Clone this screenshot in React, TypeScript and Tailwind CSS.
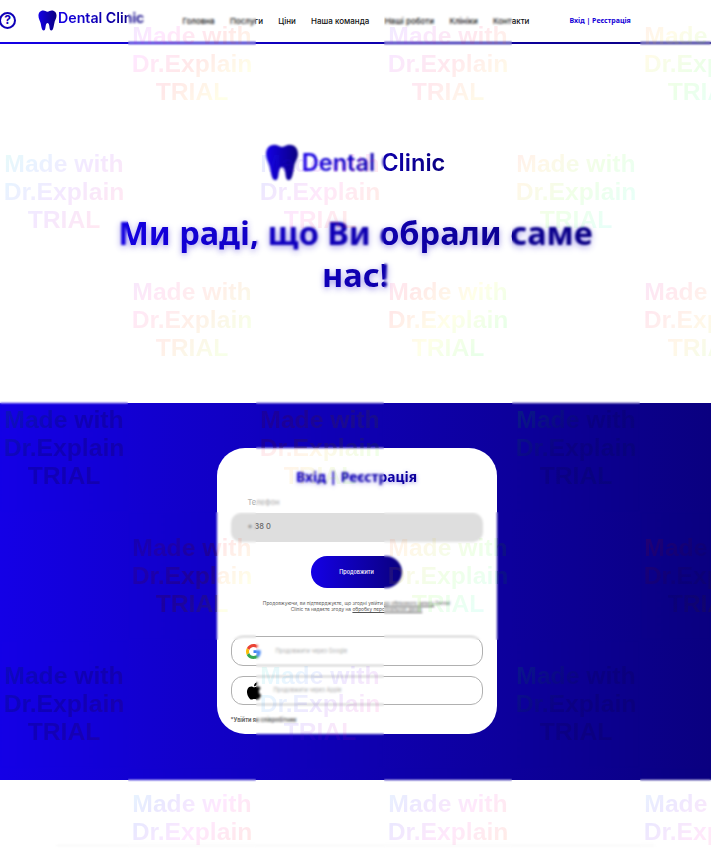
import { CSSProperties } from "react"

const navItems = ["Головна", "Послуги", "Ціни", "Наша команда", "Наші роботи", "Клініки", "Контакти"]

// hue of the watermark per grid cell, null = empty cell
type Tile = { hue: number; mode?: "dark"; splitLeft?: number; splitRight?: number; splitTop?: number }

const tiles: (Tile | null)[] = [
  null, { hue: 240 }, null, { hue: 225 }, null, { hue: 350 },
  { hue: 150 }, null, { hue: 190 }, null, { hue: 340 }, null,
  null, { hue: 260 }, null, { hue: 300 }, null, { hue: 280 },
  { hue: 200, mode: "dark" }, null, { hue: 280, splitTop: 64 }, null, { hue: 170, mode: "dark" }, null,
  null, { hue: 240, splitLeft: 89 }, null, { hue: 340, splitRight: 113 }, null, { hue: 330, mode: "dark" },
  { hue: 220, mode: "dark" }, null, { hue: 140 }, null, { hue: 190, mode: "dark" }, null,
  null, { hue: 180 }, null, { hue: 190 }, null, { hue: 190 },
]

function rainbow(hue: number, lightness: number, alpha: number) {
  const stops = [0, 60, 120, 180, 240].map((d) => `hsl(${hue + d} 100% ${lightness}% / ${alpha})`)
  return `linear-gradient(135deg, ${stops.join(", ")})`
}

function tileStyle(t: Tile): CSSProperties {
  const pale = rainbow(t.hue, 50, 0.09)
  const shade = "rgba(10,0,100,.32)"
  // over the blue band the lettering only darkens the background, hue barely shows
  const dark = `linear-gradient(135deg, hsl(${t.hue} 100% 22% / .32), rgba(10,0,100,.32) 45%, hsl(${t.hue + 60} 100% 18% / .32))`
  if (t.mode === "dark") return { backgroundImage: dark }
  if (t.splitLeft) {
    return { backgroundImage: `linear-gradient(90deg, ${shade} ${t.splitLeft}px, transparent ${t.splitLeft}px), ${pale}` }
  }
  if (t.splitRight) {
    return { backgroundImage: `linear-gradient(90deg, transparent ${t.splitRight}px, ${shade} ${t.splitRight}px), ${pale}` }
  }
  if (t.splitTop) {
    return { backgroundImage: `linear-gradient(180deg, ${shade} ${t.splitTop}px, transparent ${t.splitTop}px), ${pale}` }
  }
  return { backgroundImage: pale }
}

function Tooth({ id, className }: { id: string; className: string }) {
  return (
    <svg viewBox="0 0 40 44" className={className}>
      <defs>
        <linearGradient id={id} x1="0" y1="0" x2="1" y2="0">
          <stop offset="0" stopColor="#1400e6" />
          <stop offset="1" stopColor="#0a0080" />
        </linearGradient>
      </defs>
      <path
        fill={`url(#${id})`}
        d="M11 1C4.500 1 1 6 1 12c0 6 3 10 4.500 15 1.200 4.500 1.800 16 6.500 16 4 0 3.500-7 4.500-11 .6-2.500 1.500-4.500 3.500-4.500s2.900 2 3.500 4.500c1 4 .5 11 4.500 11 4.700 0 5.300-11.500 6.500-16C35 22 39 18 39 12 39 6 35.500 1 29 1c-3.500 0-6 2.500-9 2.500C17 3.500 14.500 1 11 1z"
      />
    </svg>
  )
}

function GoogleIcon() {
  return (
    <svg viewBox="0 0 48 48" className="h-[15px] w-[15px]">
      <path fill="#EA4335" d="M24 9.500c3.500 0 6.700 1.200 9.200 3.600l6.900-6.900C35.900 2.400 30.500 0 24 0 14.600 0 6.500 5.400 2.600 13.200l8 6.200C12.400 13.700 17.700 9.500 24 9.500z" />
      <path fill="#4285F4" d="M46.900 24.500c0-1.600-.1-3.100-.4-4.500H24v9h12.900c-.6 3-2.200 5.500-4.700 7.200l7.700 6c4.500-4.200 7-10.300 7-17.700z" />
      <path fill="#FBBC05" d="M10.500 28.600c-.5-1.400-.8-3-.8-4.600s.3-3.200.8-4.600l-8-6.200C.9 16.500 0 20.100 0 24s.9 7.500 2.600 10.800l7.900-6.200z" />
      <path fill="#34A853" d="M24 48c6.500 0 11.900-2.100 15.900-5.800l-7.700-6c-2.200 1.500-4.900 2.300-8.200 2.300-6.300 0-11.600-4.200-13.500-9.900l-8 6.200C6.500 42.600 14.600 48 24 48z" />
    </svg>
  )
}

function AppleIcon() {
  return (
    <svg viewBox="2 1 20 22" className="h-[20px] w-[17px]" fill="#000000">
      <path d="M17.050 12.540c-.03-2.580 2.110-3.820 2.200-3.880-1.200-1.760-3.070-2-3.740-2.030-1.590-.16-3.100.94-3.910.94-.81 0-2.050-.92-3.370-.89-1.730.03-3.330 1.010-4.230 2.560-1.800 3.130-.46 7.770 1.300 10.310.86 1.240 1.880 2.640 3.220 2.590 1.290-.05 1.780-.84 3.340-.84 1.560 0 2 .84 3.370.81 1.390-.02 2.270-1.260 3.120-2.510.98-1.440 1.390-2.830 1.410-2.900-.03-.01-2.700-1.040-2.710-4.160zM14.480 4.970c.71-.86 1.190-2.060 1.060-3.250-1.030.04-2.270.68-3.010 1.540-.66.76-1.240 1.980-1.080 3.150 1.140.09 2.310-.58 3.030-1.440z" />
    </svg>
  )
}

export default function App() {
  return (
    <div className="relative h-[848px] w-[711px] overflow-hidden bg-white font-['Inter',sans-serif]">
      {/* Header */}
      <header className="flex h-[42px] items-center pb-[2px]">
        <div className="ml-[-1px] flex h-[17px] w-[17px] items-center justify-center rounded-full border-[2px] border-[#0f00b8] text-[12px] leading-none font-bold text-[#0f00b8]">
          ?
        </div>
        <div className="ml-[22px] flex items-center">
          <Tooth id="tooth-top" className="h-[21px] w-[19px]" />
          <span className="mt-[-3px] ml-[1px] bg-linear-to-r from-[#1400e6] to-[#0a0080] bg-clip-text text-[14.200px] leading-none font-semibold text-transparent">
            Dental Clinic
          </span>
        </div>
        <nav className="ml-[38px] flex items-center gap-[15.300px] pt-[1px] text-[8px] leading-none font-medium whitespace-nowrap text-[#111111]">
          {navItems.map((item) => (
            <a key={item}>{item}</a>
          ))}
        </nav>
        <div className="ml-[40px] pt-[1px] font-['Noto_Sans',sans-serif] text-[7px] leading-none font-bold whitespace-nowrap text-[#1400d8]">
          Вхід | Реєстрація
        </div>
      </header>
      <div className="h-[2px] bg-linear-to-r from-[#1400e6] to-[#0a0080]" />

      {/* Hero */}
      <section className="flex h-[359px] flex-col items-center pt-[100px]">
        <div className="mr-[2px] flex items-center">
          <Tooth id="tooth-hero" className="h-[37px] w-[36px]" />
          <span className="ml-[2px] bg-linear-to-r from-[#1400e6] to-[#0a0080] bg-clip-text text-[23.600px] leading-none font-semibold text-transparent">
            Dental Clinic
          </span>
        </div>
        <h1 className="mt-[31px] w-[520px] bg-linear-to-r from-[#1400e6] to-[#0a0080] bg-clip-text text-center font-['Noto_Sans',sans-serif] text-[32.500px] leading-[42px] font-bold text-transparent drop-shadow-[0_2px_3px_rgba(20,0,200,0.4)]">
          Ми раді, що Ви обрали саме нас!
        </h1>
      </section>

      {/* Login band */}
      <section className="flex h-[377px] justify-center bg-linear-to-r from-[#1400e6] to-[#0a0080] pt-[45px]">
        <div className="ml-[2px] flex h-[286px] w-[280px] flex-col rounded-[28px] bg-white px-[14px]">
          <h2 className="mt-[19px] bg-linear-to-r from-[#1400e6] to-[#0a0080] bg-clip-text text-center font-['Noto_Sans',sans-serif] text-[13.800px] leading-[20px] font-bold text-transparent drop-shadow-[0_1px_2px_rgba(20,0,200,0.4)]">
            Вхід | Реєстрація
          </h2>
          <label className="mt-[11px] pl-[17px] text-[7.500px] leading-[10px] font-medium text-[#b5b5b5]">Телефон</label>
          <div className="mt-[5px] flex h-[29px] items-center rounded-[10px] bg-[#dedede] pb-[1px] pl-[17px] text-[7.500px] font-medium text-[#666666]">
            + 38 0
          </div>
          <button className="mx-auto mt-[14px] flex h-[32px] w-[91px] items-center justify-center rounded-full bg-linear-to-r from-[#1400e6] to-[#0a0080] text-[5.500px] font-medium text-white">
            Продовжити
          </button>
          <p className="mt-[12px] text-center text-[4.800px] leading-[6px] text-[#555555]">
            Продовжуючи, ви підтверджуєте, що згодні увійти <span className="underline">до облікового запису</span> Dental
            <br />
            Clinic та надаєте згоду на <span className="underline">обробку персональних даних</span>
          </p>
          <button className="mt-[24px] flex h-[30px] items-center rounded-[12px] border border-[#b0b0b0] pl-[14px] text-[5.500px] text-[#aaaaaa]">
            <GoogleIcon />
            <span className="ml-[15px]">Продовжити через Google</span>
          </button>
          <button className="mt-[10px] flex h-[29px] items-center rounded-[12px] border border-[#b0b0b0] pl-[14px] text-[5.500px] text-[#aaaaaa]">
            <AppleIcon />
            <span className="ml-[11px]">Продовжити через Apple</span>
          </button>
          <a className="mt-[11px] text-[5.500px] leading-[8px] font-bold text-[#666666]">*Увійти як співробітник</a>
        </div>
      </section>

      <div className="mx-[56px] mt-[65px] h-[1px] bg-[#f4f4f4] blur-[1px]" />

      {/* Trial watermark, checkerboard over the page */}
      <div className="pointer-events-none absolute top-0 left-0 grid w-[768px] grid-cols-[repeat(6,128px)] auto-rows-[128px]">
        {tiles.map((t, i) =>
          t ? (
            <div
              key={i}
              style={tileStyle(t)}
              className="bg-clip-text pt-[22px] text-center font-['Liberation_Sans',sans-serif] text-[24.700px] leading-[28px] font-bold text-transparent backdrop-blur-[1.200px]"
            >
              Made with
              <br />
              Dr.Explain
              <br />
              TRIAL
            </div>
          ) : (
            <div key={i} />
          ),
        )}
      </div>
    </div>
  )
}
